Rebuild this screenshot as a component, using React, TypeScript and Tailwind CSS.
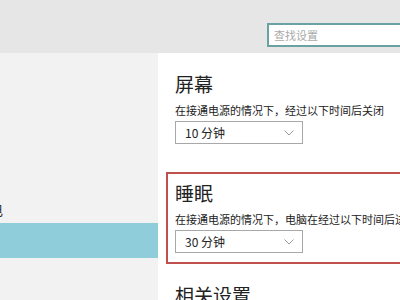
import React from "react";

const font = { fontFamily: '"Noto Sans CJK SC", "Noto Sans", sans-serif' };

function Chevron() {
  return (
    <svg width="10" height="6" viewBox="0 0 10 6" className="shrink-0">
      <path d="M0.5 0.5 L5 5 L9.5 0.5" fill="none" stroke="#9a9a9a" strokeWidth="1" />
    </svg>
  );
}

function Select({ value }: { value: string }) {
  return (
    <div className="flex h-[23px] w-[128px] items-center justify-between border border-[#a8a8a8] bg-white pl-[9px] pr-[8px]">
      <span className="text-[12px] leading-none text-[#222]">{value}</span>
      <Chevron />
    </div>
  );
}

export default function App() {
  return (
    <div className="flex h-[300px] w-[400px] flex-col overflow-hidden bg-white" style={font}>
      <div className="flex h-[53px] shrink-0 items-start bg-[#e6e6e6] pl-[267px] pt-[23px]">
        <div className="flex h-[24px] w-[160px] shrink-0 items-center border-2 border-[#6aa2a4] bg-white pl-[5px]">
          <span className="text-[11px] leading-none text-[#aaaaaa]">查找设置</span>
        </div>
      </div>
      <div className="flex flex-1">
        <div className="flex w-[158px] shrink-0 flex-col bg-[#f2f2f2] pt-[145px]">
          <div className="h-[25px] overflow-hidden">
            <span className="ml-[-11px] block text-[14px] leading-[22px] text-[#333]">电</span>
          </div>
          <div className="h-[35px] bg-[#8ecdd9]" />
        </div>
        <div className="flex flex-1 flex-col pl-[8px] pt-[18px]">
          <div className="pl-[9px]">
            <div className="text-[19px] leading-[26px] text-[#222]">屏幕</div>
            <div className="mt-[6px] whitespace-nowrap text-[11px] leading-[15px] text-[#222]">
              在接通电源的情况下，经过以下时间后关闭
            </div>
            <div className="mt-[3px]">
              <Select value="10 分钟" />
            </div>
          </div>
          <div className="mt-[28px] h-[92px] w-[260px] border-2 border-r-0 border-[#c0504d] pl-[7px] pt-[6px]">
            <div className="text-[19px] leading-[26px] text-[#222]">睡眠</div>
            <div className="mt-[6px] whitespace-nowrap text-[11px] leading-[15px] text-[#222]">
              在接通电源的情况下，电脑在经过以下时间后进入睡眠
            </div>
            <div className="mt-[3px]">
              <Select value="30 分钟" />
            </div>
          </div>
          <div className="mt-[18px] pl-[9px] text-[19px] leading-[26px] text-[#222]">相关设置</div>
        </div>
      </div>
    </div>
  );
}
